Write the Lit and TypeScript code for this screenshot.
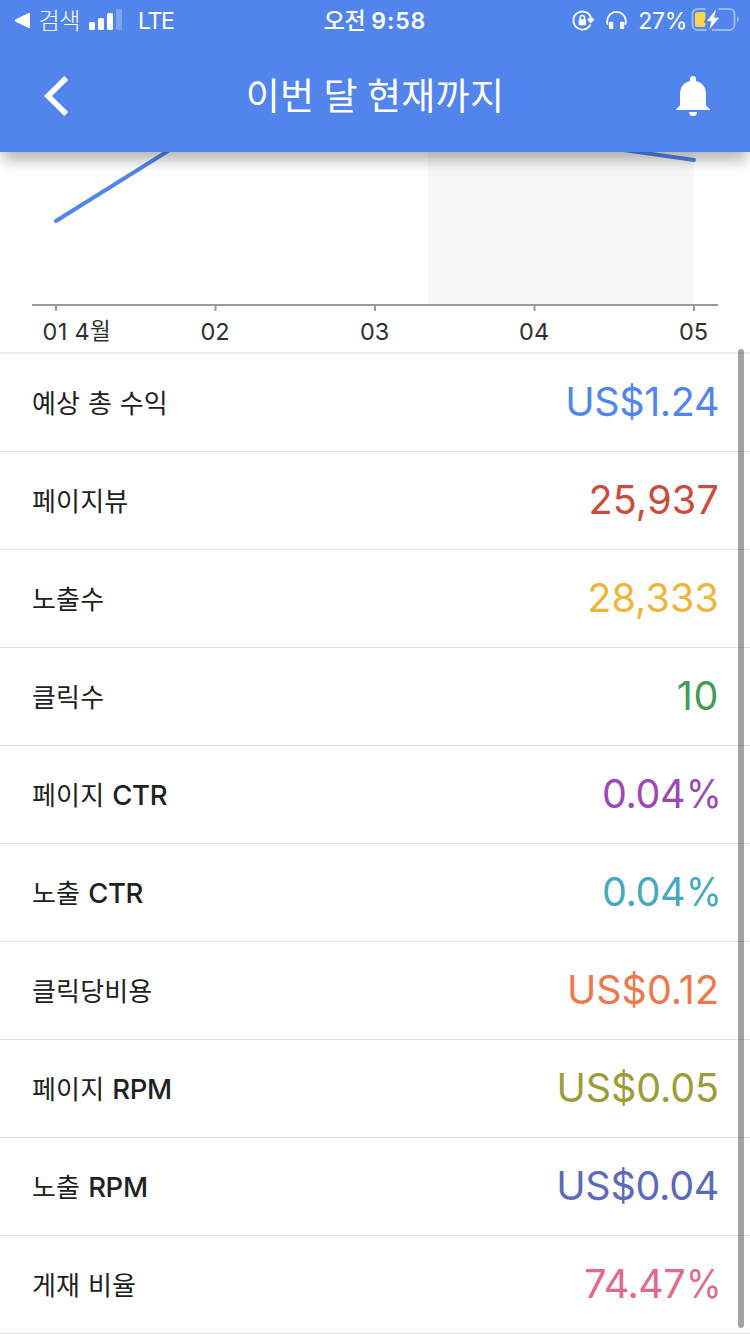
import { LitElement, html, svg, css } from "lit";
import { customElement } from "lit/decorators.js";
import { styleMap } from "lit/directives/style-map.js";

interface Metric {
  label: string;
  latin?: string;
  value: string;
  tone: string;
  /** letter-spacing of the value, in pixels */
  track: number;
}

const METRICS: Metric[] = [
  { label: "예상 총 수익", value: "US$1.24", tone: "blue", track: -0.4 },
  { label: "페이지뷰", value: "25,937", tone: "red", track: 0.2 },
  { label: "노출수", value: "28,333", tone: "yellow", track: 0.1 },
  { label: "클릭수", value: "10", tone: "green", track: 0.6 },
  { label: "페이지", latin: "CTR", value: "0.04%", tone: "purple", track: -0.4 },
  { label: "노출", latin: "CTR", value: "0.04%", tone: "cyan", track: -0.4 },
  { label: "클릭당비용", value: "US$0.12", tone: "orange", track: 0 },
  { label: "페이지", latin: "RPM", value: "US$0.05", tone: "olive", track: -0.1 },
  { label: "노출", latin: "RPM", value: "US$0.04", tone: "indigo", track: -0.3 },
  { label: "게재 비율", value: "74.47%", tone: "pink", track: -0.5 },
];

@customElement("status-bar")
class StatusBar extends LitElement {
  static styles = css`
    :host {
      display: grid;
      grid-template-columns: 1fr auto 1fr;
      align-items: center;
      height: 40px;
      color: #fff;
      font: 400 23px/40px Inter, "Noto Sans CJK KR", sans-serif;
      white-space: nowrap;
    }
    .left, .right, .time { display: flex; align-items: center; height: 40px; }
    .left { padding-left: 14px; }
    .back { margin-right: 7.5px; }
    .ko { font: 300 23px/38px "Noto Sans CJK KR", sans-serif; letter-spacing: -0.4px; padding-bottom: 3px; }
    .bars { margin: 0 16.5px 0 8.5px; }
    .lte { font-size: 23px; letter-spacing: -1.3px; padding-top: 1px; }
    .time { font-weight: 600; letter-spacing: 0.9px; gap: 6px; }
    .time .ko { font-weight: 500; }
    .time span:last-child { padding-top: 1px; }
    .right { justify-content: flex-end; padding-right: 11px; }
    .lock { margin-right: 12px; }
    .phones { margin-right: 11px; }
    .pct { margin-right: 4px; letter-spacing: -0.3px; padding-top: 1px; }
    svg { display: block; flex: none; }
  `;
  render() {
    return html`
      <div class="left">
        <svg class="back" width="17" height="40" viewBox="0 0 17 40"><path d="M1.8 20.5 15 13.8V27.2Z" fill="#fff" stroke="#fff" stroke-width="2" stroke-linejoin="round"/></svg>
        <span class="ko">검색</span>
        <svg class="bars" width="33" height="40" viewBox="0 0 33 40" fill="#fff">
          <rect x="0" y="22" width="6" height="8" rx="1.5"/><rect x="9" y="18" width="6" height="12" rx="1.5"/>
          <rect x="18" y="13" width="6" height="17" rx="1.5"/><rect x="27" y="9" width="6" height="21" rx="1.5" opacity=".25"/>
        </svg>
        <span class="lte">LTE</span>
      </div>
      <div class="time"><span class="ko">오전</span><span>9:58</span></div>
      <div class="right">
        <svg class="lock" width="22" height="40" viewBox="0 0 22 40" fill="none" stroke="#fff" stroke-width="1.8">
          <path d="M18.5 24.5A9 9 0 1 1 18.9 17.5"/>
          <path d="M15.6 18.8 18.9 17.2 22 18.8V20L18.8 23.4 15.6 20Z" fill="#fff" stroke="none"/>
          <rect x="6.7" y="19.3" width="7.3" height="6" rx=".8" fill="#fff" stroke="none"/>
          <path d="M8.25 20v-2.3a2.1 2.1 0 0 1 4.2 0V20" stroke-width="1.5"/>
        </svg>
        <svg class="phones" width="21" height="40" viewBox="0 0 21 40" fill="none" stroke="#fff" stroke-width="1.8">
          <path d="M1.8 24.8C1.3 23.5 1.2 22.3 1.2 21a9.3 9.1 0 0 1 18.6 0c0 1.3-.1 2.5-.6 3.8"/>
          <rect x="3" y="21.8" width="4.2" height="7.2" rx="1" fill="#fff" stroke="none"/>
          <rect x="14" y="21.8" width="4.2" height="7.2" rx="1" fill="#fff" stroke="none"/>
        </svg>
        <span class="pct">27%</span>
        <svg width="48" height="40" viewBox="0 0 48 40">
          <path d="M14.5 9H6.5A5 5 0 0 0 1.5 14V25A5 5 0 0 0 6.5 30H15.5M27.5 9H38.5A5 5 0 0 1 43.5 14V25A5 5 0 0 1 38.5 30H21" fill="none" stroke="#fff" stroke-opacity=".42" stroke-width="2"/>
          <path d="M46 16.5c2.4 1 2.4 5 0 6Z" fill="#fff" opacity=".45"/>
          <path d="M6.5 12H12.5Q14.5 12 14.5 14V19L12.6 22L14.5 23V25Q14.5 27 12.5 27H6.5Q4 27 4 24.5V14.5Q4 12 6.5 12Z" fill="#f8d549"/>
          <path d="M25 9.5 15.8 21.3H20.5L18.3 29.5 28.2 17.7H23Z" fill="#fff"/>
        </svg>
      </div>`;
  }
}

@customElement("app-bar")
class AppBar extends LitElement {
  static styles = css`
    :host {
      display: grid;
      grid-template-columns: 1fr auto 1fr;
      align-items: center;
      height: 112px;
      color: #fff;
    }
    .back { margin-left: 44px; }
    .bell { margin-left: auto; margin-right: 39px; }
    .title { margin: 0; padding-bottom: 4px; font: 400 37px/108px "Noto Sans CJK KR", sans-serif; letter-spacing: 0.3px; word-spacing: 0.5px; white-space: nowrap; }
    svg { display: block; }
  `;
  render() {
    return html`
      <svg class="back" width="26" height="112" viewBox="0 0 26 112"><path d="M22.2 38 4 56 22.2 74" fill="none" stroke="#fff" stroke-width="5.6"/></svg>
      <h1 class="title">이번 달 현재까지</h1>
      <svg class="bell" width="36" height="112" viewBox="0 0 36 112" fill="#fff">
        <path d="M15 41V39a3 3 0 0 1 6 0V41C27.5 42.5 31 47.5 31 54V65.5L35 69.5V70H1V69.5L5 65.5V54C5 47.5 8.5 42.5 15 41Z"/>
        <path d="M14 72H22A4 4 0 0 1 14 72Z"/>
      </svg>`;
  }
}

@customElement("trend-chart")
class TrendChart extends LitElement {
  static styles = css`
    :host { display: block; height: 200px; border-bottom: 2px solid #ededed; }
    svg { display: block; }
    .day { font: 400 23.5px Inter, sans-serif; fill: #303030; }
    .first { letter-spacing: 0.3px; }
    .ko { font: 400 22.5px "Noto Sans CJK KR", sans-serif; }
  `;
  render() {
    const ticks = [56, 215.5, 375, 534.5, 694];
    return html`<svg width="750" height="200" viewBox="0 0 750 200">
      <rect x="428" y="0" width="266" height="152" fill="#f7f7f7"/>
      <path d="M56 69 176 -6M600 -5.4 694 8" fill="none" stroke="#5285ec" stroke-width="4" stroke-linecap="round"/>
      <rect x="32" y="152" width="686" height="2" fill="#9a9a9a"/>
      ${ticks.map((x) => svg`<rect x=${x - 1} y="154" width="2" height="5" fill="#9a9a9a"/>`)}
      <text class="day first" x="42.5" y="188">01 4<tspan class="ko" dy="-1">월</tspan></text>
      ${["02", "03", "04", "05"].map((d, i) => svg`<text class="day" text-anchor="middle" x=${ticks[i + 1] - 0.4} y="188">${d}</text>`)}
    </svg>`;
  }
}

@customElement("metric-row")
class MetricRow extends LitElement {
  static properties = { metric: { attribute: false } };
  declare metric: Metric;
  static styles = css`
    :host {
      display: flex;
      justify-content: space-between;
      align-items: center;
      box-sizing: border-box;
      height: 98px;
      padding: 0 31px 0 32px;
      border-bottom: 1px solid #dedede;
      color: #212121;
      white-space: nowrap;
    }
    .label { padding-top: 2px; font: 500 27.5px/95px Inter, sans-serif; letter-spacing: -0.35px; }
    .ko { font: 400 26px/1 "Noto Sans CJK KR", sans-serif; line-height: 0; letter-spacing: 0.15px; word-spacing: 1.8px; }
    .latin { margin-left: 8px; }
    .value { font: 400 39.5px/97px Inter, sans-serif; }
    .percent { display: inline-block; transform: scaleX(0.92); transform-origin: right; margin: 0 -2px 0 -2.5px; }
    .blue { color: #5285ec; }
    .red { color: #ca4c3c; }
    .yellow { color: #ecb63c; }
    .green { color: #3f9c5c; }
    .purple { color: #9c49b5; }
    .cyan { color: #46a9be; }
    .orange { color: #ee784c; }
    .olive { color: #9c9c39; }
    .indigo { color: #5c6aba; }
    .pink { color: #e06992; }
  `;
  render() {
    const m = this.metric;
    const percent = m.value.endsWith("%");
    const digits = percent ? m.value.slice(0, -1) : m.value;
    return html`
      <span class="label"><span class="ko">${m.label}</span>${m.latin ? html`<span class="latin">${m.latin}</span>` : null}</span>
      <span class="value ${m.tone}" style=${styleMap({ letterSpacing: `${m.track}px` })}>${digits}${percent ? html`<span class="percent">%</span>` : null}</span>`;
  }
}

@customElement("app-root")
class AppRoot extends LitElement {
  static styles = css`
    :host { display: block; position: relative; width: 750px; height: 1334px; overflow: hidden; background: #fff; }
    .header { position: relative; height: 152px; background: #5285ec; box-shadow: 0 11px 14px -3px rgba(0, 0, 0, 0.3); }
    .scrollbar { position: absolute; top: 349px; right: 6px; width: 6px; height: 979px; border-radius: 3px; background: rgba(0, 0, 0, 0.36); }
  `;
  render() {
    return html`
      <header class="header"><status-bar></status-bar><app-bar></app-bar></header>
      <trend-chart></trend-chart>
      <main>${METRICS.map((m) => html`<metric-row .metric=${m}></metric-row>`)}</main>
      <div class="scrollbar"></div>`;
  }
}
